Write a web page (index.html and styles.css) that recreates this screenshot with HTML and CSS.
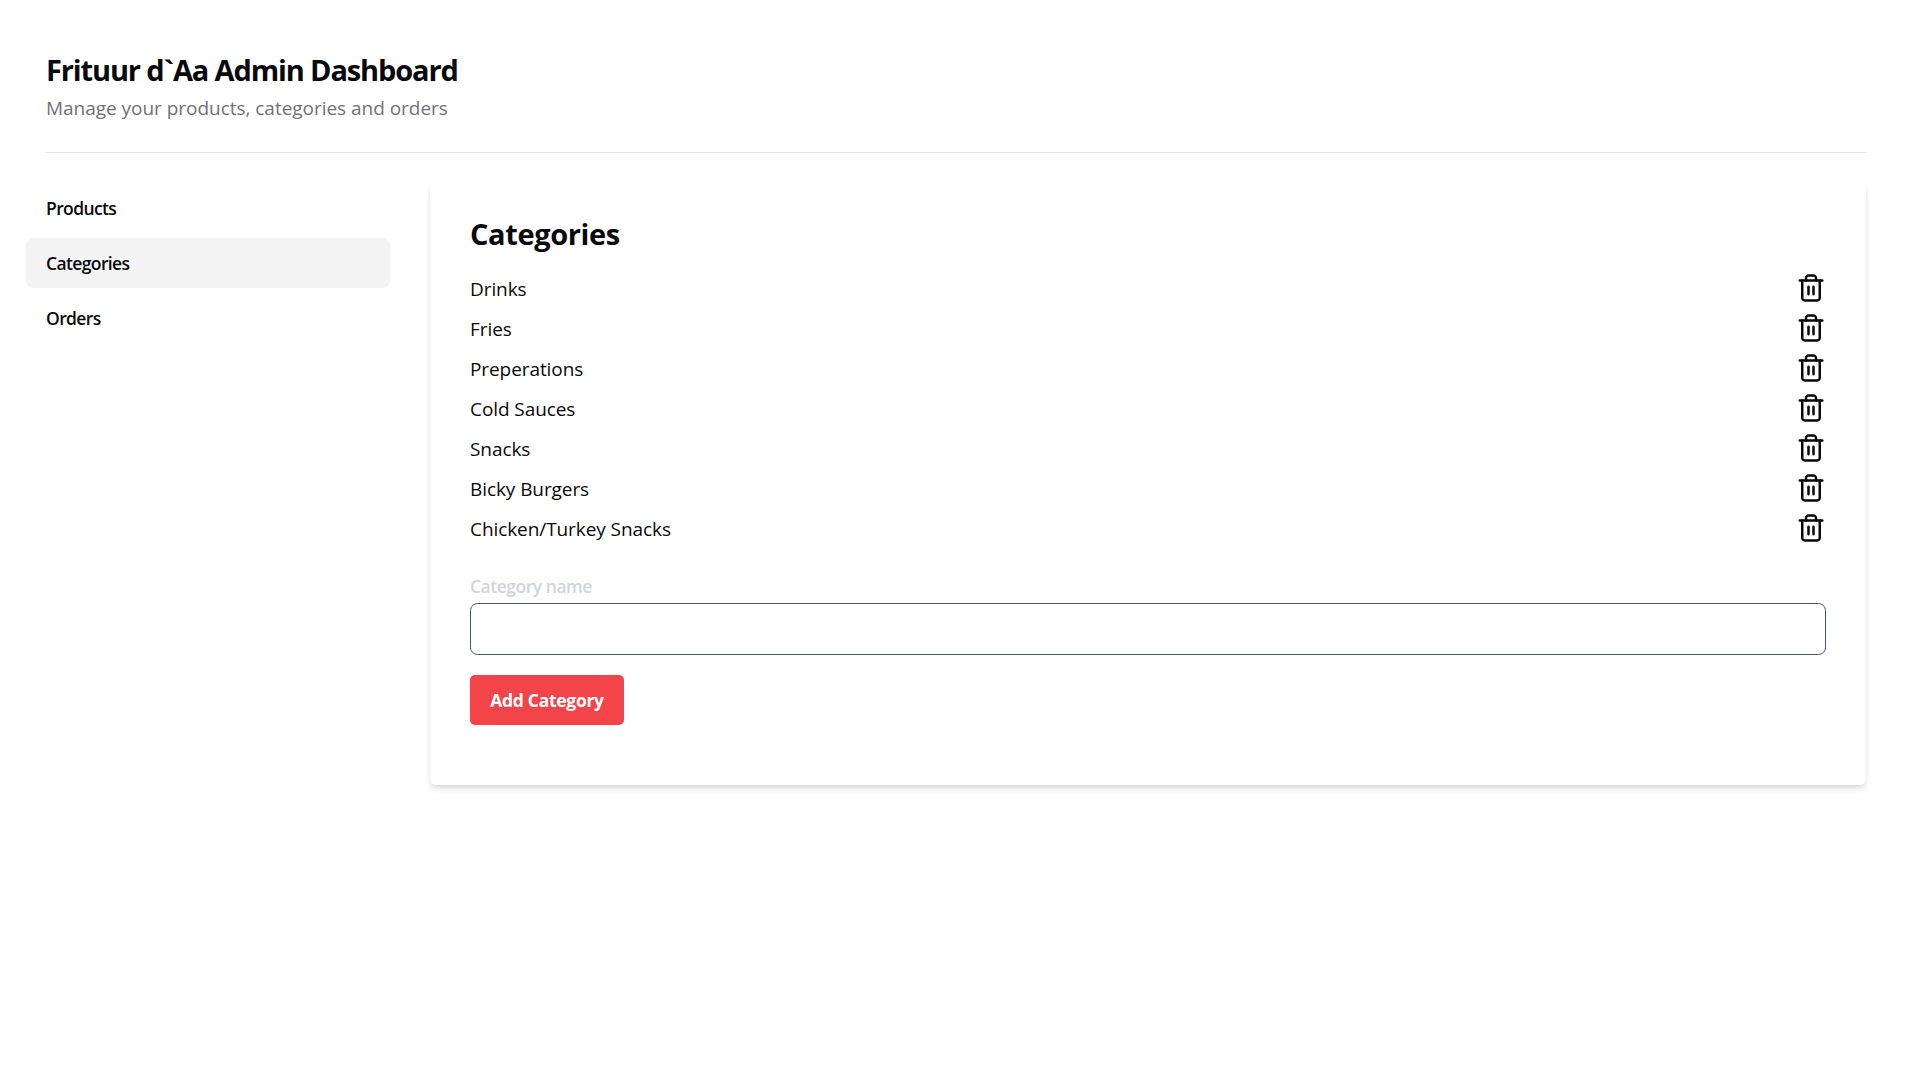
FILE: index.html
```html
<!DOCTYPE html>
<html lang="en">
<head>
<meta charset="utf-8">
<title>Frituur d`Aa Admin Dashboard</title>
<link rel="stylesheet" href="styles.css">
</head>
<body>
<svg class="sprite" aria-hidden="true">
  <symbol id="trash" viewBox="0 0 24 24" fill="none" stroke="currentColor" stroke-width="2" stroke-linecap="round" stroke-linejoin="round">
    <path d="M3 6h18"/>
    <path d="M19 6v14c0 1-1 2-2 2H7c-1 0-2-1-2-2V6"/>
    <path d="M8 6V4c0-1 1-2 2-2h4c1 0 2 1 2 2v2"/>
    <path d="M10 11v6M14 11v6"/>
  </symbol>
</svg>
<div class="page">
  <header class="header">
    <h1 class="title">Frituur d`Aa Admin Dashboard</h1>
    <p class="subtitle">Manage your products, categories and orders</p>
  </header>
  <div class="layout">
    <nav class="nav">
      <a class="nav-item">Products</a>
      <a class="nav-item active">Categories</a>
      <a class="nav-item">Orders</a>
    </nav>
    <main class="card">
      <h2 class="card-title">Categories</h2>
      <ul class="list">
        <li><span>Drinks</span><svg class="icon"><use href="#trash"/></svg></li>
        <li><span>Fries</span><svg class="icon"><use href="#trash"/></svg></li>
        <li><span>Preperations</span><svg class="icon"><use href="#trash"/></svg></li>
        <li><span>Cold Sauces</span><svg class="icon"><use href="#trash"/></svg></li>
        <li><span>Snacks</span><svg class="icon"><use href="#trash"/></svg></li>
        <li><span>Bicky Burgers</span><svg class="icon"><use href="#trash"/></svg></li>
        <li><span>Chicken/Turkey Snacks</span><svg class="icon"><use href="#trash"/></svg></li>
      </ul>
      <form class="form">
        <label class="label" for="name">Category name</label>
        <input class="input" id="name" type="text">
        <button class="button" type="button">Add Category</button>
      </form>
    </main>
  </div>
</div>
</body>
</html>
```
FILE: styles.css
```css
* { box-sizing: border-box; }
body {
  margin: 0;
  background: #fff;
  color: #09090b;
  font-family: "Open Sans", "Noto Sans", sans-serif;
}
h1, h2, p, ul { margin: 0; padding: 0; }
.sprite { display: none; }
.page {
  min-height: 100vh;
  padding: 50px 46px 0;
}
.header {
  height: 103px;
  border-bottom: 1px solid #e4e4e7;
}
.title {
  font-size: 29px;
  font-weight: 700;
  line-height: 40px;
  letter-spacing: -1.13px;
}
.subtitle {
  margin-top: 3px;
  font-size: 19px;
  line-height: 30px;
  letter-spacing: -.03px;
  color: #71717a;
}
.layout {
  display: flex;
  align-items: flex-start;
  gap: 40px;
  margin-top: 30px;
}
.nav {
  display: flex;
  flex-direction: column;
  gap: 5px;
  width: 364px;
  margin-left: -20px;
}
.nav-item {
  height: 50px;
  padding: 0 20px;
  border-radius: 7.5px;
  font-size: 17.5px;
  font-weight: 600;
  line-height: 50px;
  letter-spacing: -.62px;
}
.nav-item.active { background: #f4f4f5; }
.card {
  flex: 1;
  height: 602px;
  padding: 31px 40px 0;
  border-radius: 5px;
  background: #fff;
  box-shadow: 0 5px 7.5px -1.25px rgba(0, 0, 0, .1), 0 2.5px 5px -2.5px rgba(0, 0, 0, .1);
}
.card-title {
  font-size: 29px;
  font-weight: 700;
  line-height: 40px;
  letter-spacing: -.38px;
}
.list {
  margin-top: 15px;
  list-style: none;
}
.list li {
  display: flex;
  align-items: center;
  justify-content: space-between;
  height: 40px;
  font-size: 19px;
  letter-spacing: -.08px;
}
.icon {
  width: 30px;
  height: 30px;
  margin-bottom: 2px;
}
.form {
  display: flex;
  flex-direction: column;
  align-items: flex-start;
  margin-top: 25px;
}
.label {
  height: 29px;
  color: #d1d5db;
  font-size: 17.5px;
  font-weight: 600;
  line-height: 25px;
  letter-spacing: -.48px;
}
.input {
  width: 100%;
  height: 52px;
  margin: 0;
  padding: 0 15px;
  border: 1px solid #475569;
  border-radius: 7.5px;
  background: #fff;
  font: inherit;
}
.button {
  height: 50px;
  margin-top: 20px;
  width: 154px;
  padding: 0;
  border: 0;
  border-radius: 5px;
  background: #f34449;
  color: #fff;
  font-family: inherit;
  font-size: 17.5px;
  font-weight: 700;
  letter-spacing: -.3px;
}
```
